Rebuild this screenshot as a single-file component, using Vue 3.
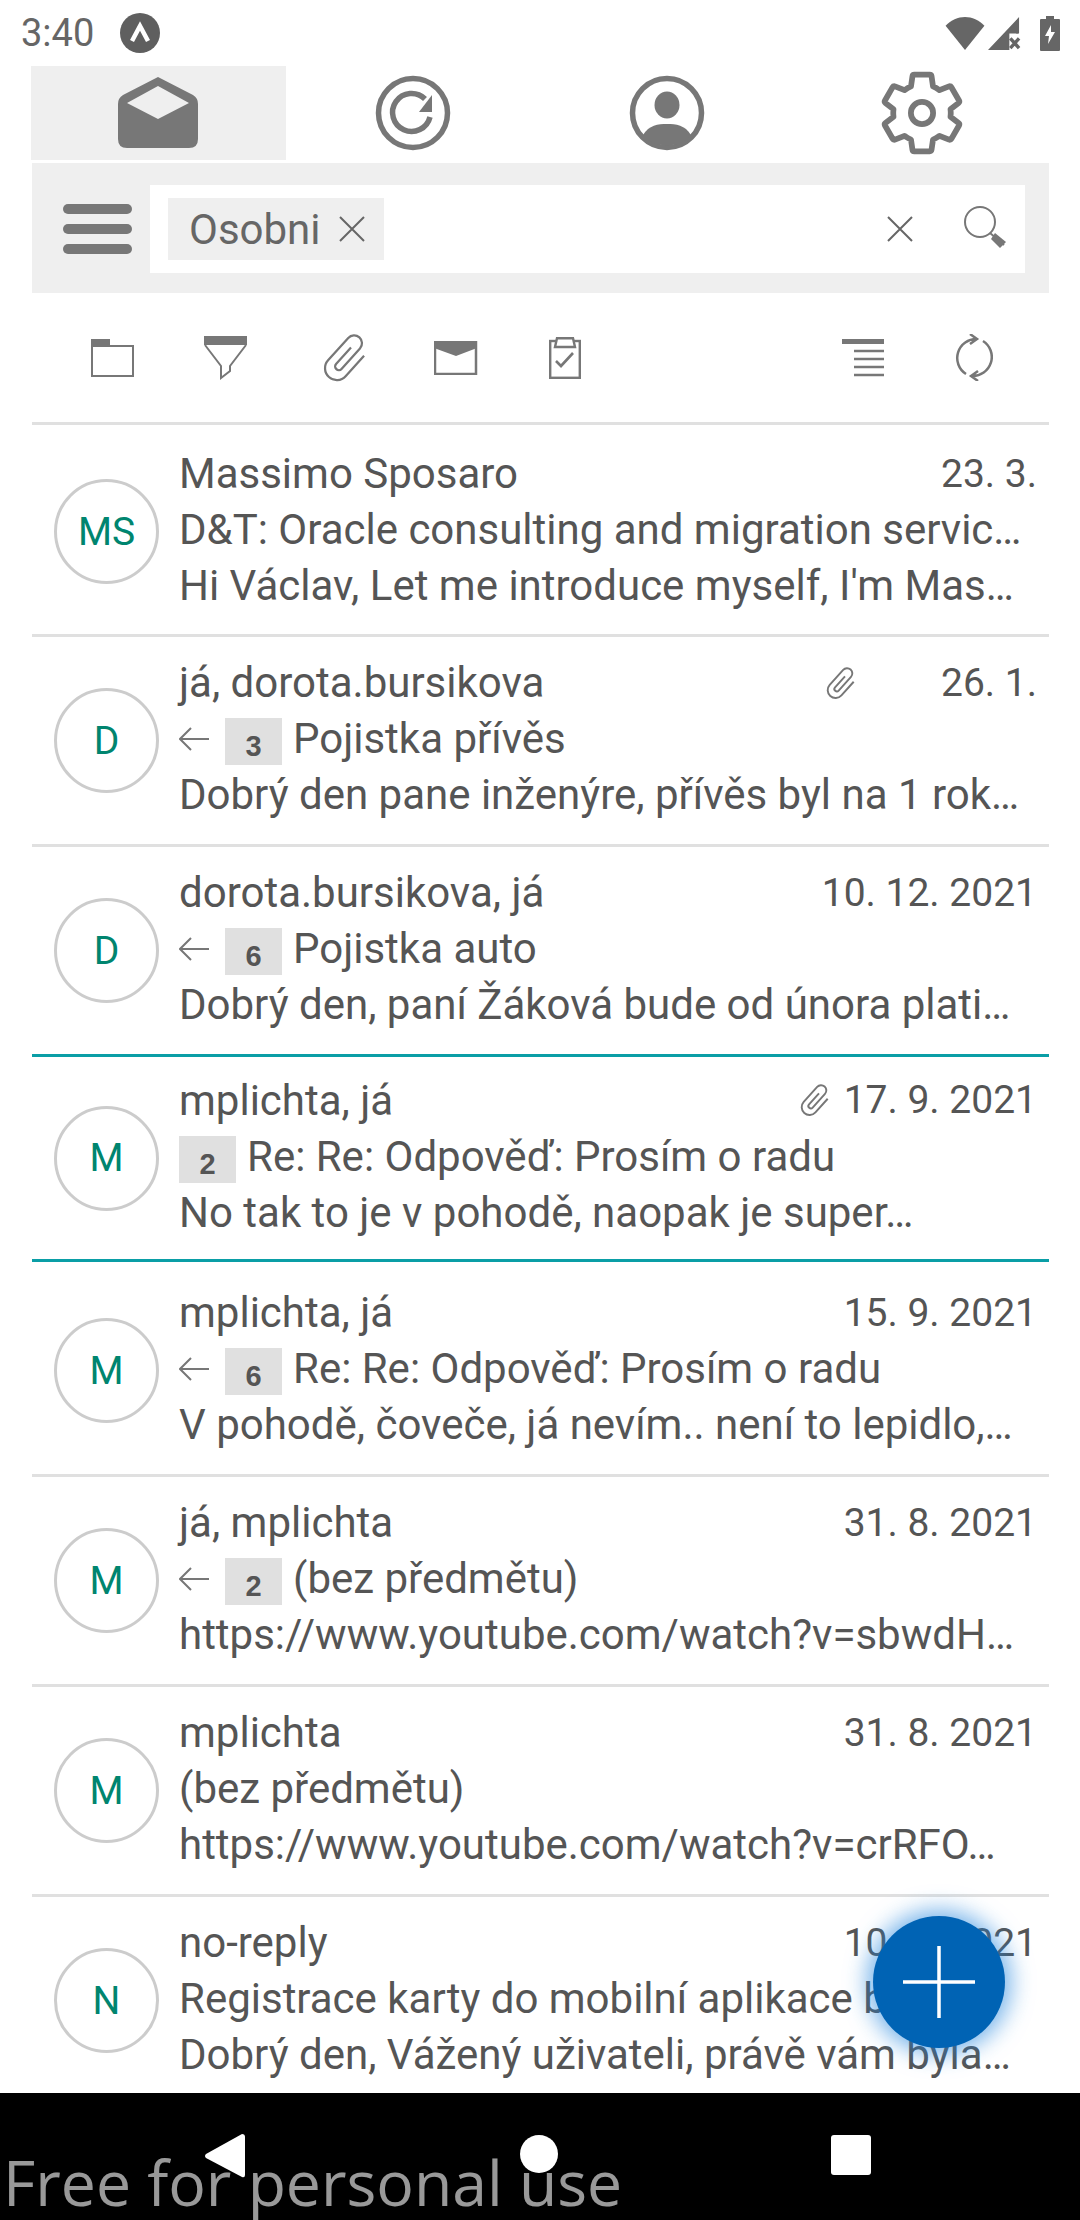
<template>
  <div class="phone">
    <div class="status">
      <span class="time">3:40</span>
      <svg class="app-badge" width="40" height="40" viewBox="0 0 40 40">
        <circle cx="20" cy="20" r="20" fill="#5f5f5f" />
        <path d="M12 28 L20 13 L28 28" fill="none" stroke="#fff" stroke-width="4.5" />
      </svg>
      <div class="status-right">
        <svg width="40" height="33" viewBox="0 0 40 34"><path d="M0 9 C11 -3 29 -3 40 9 L20 34 Z" fill="#666" /></svg>
        <svg class="signal" width="33" height="33" viewBox="0 0 34 34">
          <path d="M0 34 L32 0 V17 H22 V34 Z" fill="#666" />
          <path d="M30 3 V17" stroke="#666" stroke-width="2" />
          <path d="M23 22 L32 32 M32 22 L23 32" stroke="#666" stroke-width="3.5" />
        </svg>
        <svg class="battery" width="20" height="35" viewBox="0 0 20 35">
          <path d="M6 0 H14 V3 H19 a1 1 0 0 1 1 1 V34 a1 1 0 0 1 -1 1 H1 a1 1 0 0 1 -1 -1 V4 a1 1 0 0 1 1 -1 H6 Z" fill="#666" />
          <path d="M11 9 L5 20 H9 L8 28 L15 16 H11 Z" fill="#fff" />
        </svg>
      </div>
    </div>

    <div class="tabs">
      <div class="tab active">
        <svg width="80" height="72" viewBox="0 0 80 72">
          <path fill="#777" fill-rule="evenodd" d="M40 0 L75 18 Q80 21 80 27 V62 Q80 71 71 71 H9 Q0 71 0 62 V27 Q0 21 5 18 Z M40 9 L9 26 L40 42 L71 26 Z" />
        </svg>
      </div>
      <div class="tab">
        <svg width="76" height="76" viewBox="0 0 76 76">
          <circle cx="38" cy="38" r="34.5" fill="none" stroke="#777" stroke-width="5.5" />
          <path d="M55 42 A19 19 0 1 1 50 24" fill="none" stroke="#777" stroke-width="5.5" />
          <path d="M57 20 V37 H44 Z" fill="#777" />
        </svg>
      </div>
      <div class="tab">
        <svg width="76" height="76" viewBox="0 0 76 76">
          <circle cx="38" cy="38" r="34.5" fill="none" stroke="#777" stroke-width="5.5" />
          <ellipse cx="38" cy="30" rx="12.5" ry="13.5" fill="#777" />
          <path d="M14 60 C20 50 29 49 38 49 C47 49 56 50 62 60 C50 74 26 74 14 60 Z" fill="#777" />
        </svg>
      </div>
      <div class="tab">
        <svg width="92" height="92" viewBox="0 0 24 24">
          <path fill="none" stroke="#777" stroke-width="1.5" stroke-linejoin="round" d="M19.43 12.98c.04-.32.07-.64.07-.98 0-.34-.03-.66-.07-.98l2.11-1.65c.19-.15.24-.42.12-.64l-2-3.46c-.09-.16-.26-.25-.44-.25-.06 0-.12.01-.17.03l-2.49 1c-.52-.4-1.08-.73-1.69-.98l-.38-2.65C14.46 2.18 14.25 2 14 2h-4c-.25 0-.46.18-.49.42l-.38 2.65c-.61.25-1.17.59-1.69.98l-2.49-1c-.06-.02-.12-.03-.18-.03-.17 0-.34.09-.43.25l-2 3.46c-.13.22-.07.49.12.64l2.11 1.65c-.04.32-.07.65-.07.98 0 .33.03.66.07.98l-2.11 1.65c-.19.15-.24.42-.12.64l2 3.46c.09.16.26.25.44.25.06 0 .12-.01.17-.03l2.49-1c.52.4 1.08.73 1.69.98l.38 2.65c.03.24.24.42.49.42h4c.25 0 .46-.18.49-.42l.38-2.65c.61-.25 1.17-.59 1.69-.98l2.49 1c.06.02.12.03.18.03.17 0 .34-.09.43-.25l2-3.46c.12-.22.07-.49-.12-.64l-2.11-1.65z" />
          <circle cx="12" cy="12" r="2.9" fill="none" stroke="#777" stroke-width="1.5" />
        </svg>
      </div>
    </div>

    <div class="searchbar">
      <div class="burger"><i></i><i></i><i></i></div>
      <div class="search-input">
        <div class="chip">
          <span>Osobni</span>
          <svg width="26" height="26" viewBox="0 0 26 26"><path d="M1 1 L25 25 M25 1 L1 25" stroke="#666" stroke-width="2" /></svg>
        </div>
        <svg class="clear" width="26" height="26" viewBox="0 0 26 26"><path d="M1 1 L25 25 M25 1 L1 25" stroke="#666" stroke-width="2" /></svg>
        <svg class="loupe" width="44" height="42" viewBox="0 0 44 42">
          <circle cx="16" cy="16" r="15" fill="none" stroke="#777" stroke-width="2" />
          <path d="M26 27 L40 39" stroke="#777" stroke-width="2" />
          <path d="M31 27 L42 36 L36 42 L27 33 Z" fill="#777" />
        </svg>
      </div>
    </div>

    <div class="toolbar">
      <div class="tool">
        <svg width="44" height="38" viewBox="0 0 44 38">
          <rect x="1" y="7" width="41" height="30" fill="none" stroke="#777" stroke-width="2" />
          <rect x="0" y="0" width="19" height="7" fill="#777" />
        </svg>
      </div>
      <div class="tool">
        <svg width="44" height="44" viewBox="0 0 44 44">
          <rect x="0" y="0" width="43" height="9" fill="#777" />
          <path d="M1 9 L17 30 V42 L26 35 V30 L42 9" fill="none" stroke="#777" stroke-width="2" />
        </svg>
      </div>
      <div class="tool">
        <svg class="tool-clip" width="63" height="63" viewBox="0 0 24 24">
          <path d="M16.5 7v10.5a4.5 4.5 0 0 1-9 0V6a3 3 0 0 1 6 0v10.5a1.4 1.4 0 0 1-2.8 0V8" fill="none" stroke="#777" stroke-width="0.85" transform="rotate(42 12 12)" />
        </svg>
      </div>
      <div class="tool">
        <svg class="tool-mail" width="44" height="34" viewBox="0 0 44 34">
          <rect x="1" y="1" width="41" height="32" fill="none" stroke="#777" stroke-width="2.5" />
          <path d="M0 0 H43 V7 L22 15 L0 7 Z" fill="#777" />
        </svg>
      </div>
      <div class="tool">
        <svg width="32" height="42" viewBox="0 0 32 42">
          <rect x="1.2" y="4" width="29.6" height="36.8" fill="#fff" stroke="#777" stroke-width="2.4" />
          <path d="M6 10 L8 1.2 H24 L26 10 Z" fill="#fff" stroke="#777" stroke-width="2.4" />
          <path d="M7 24 L12 29 L24 16" fill="none" stroke="#777" stroke-width="2.6" />
        </svg>
      </div>
      <div class="tools-right">
        <div class="tool">
          <svg width="42" height="38" viewBox="0 0 42 38">
            <rect x="0" y="0" width="42" height="5" fill="#777" />
            <path d="M12 12 H42 M12 20 H42 M12 28 H42 M12 36 H42" stroke="#777" stroke-width="2.5" />
          </svg>
        </div>
        <div class="tool">
          <svg width="38" height="47" viewBox="0 0 38 47">
            <path d="M11 40 A19 19 0 0 1 22 5 M15 0 L22 5 L15 10" fill="none" stroke="#777" stroke-width="2.5" />
            <path d="M28 7 A19 19 0 0 1 17 42 M23 37 L16 42 L23 47" fill="none" stroke="#777" stroke-width="2.5" />
          </svg>
        </div>
      </div>
    </div>

    <div class="list">
      <div v-for="m in mails" :key="m.from + m.date" class="row" :class="{ teal: m.teal, short: m.short }">
        <div class="avatar">{{ m.initials }}</div>
        <div class="body">
          <div class="line top">
            <span class="from">{{ m.from }}</span>
            <svg v-if="m.clip" class="clip" :class="m.clip" width="42" height="42" viewBox="0 0 24 24">
              <path d="M16.5 7v10.5a4.5 4.5 0 0 1-9 0V6a3 3 0 0 1 6 0v10.5a1.4 1.4 0 0 1-2.8 0V8" fill="none" stroke="#777" stroke-width="1.1" transform="rotate(42 12 12)" />
            </svg>
            <span class="date">{{ m.date }}</span>
          </div>
          <div class="line">
            <svg v-if="m.replied" class="arrow" width="30" height="24" viewBox="0 0 30 24">
              <path d="M30 12 H2 M12 1 L1 12 L12 23" fill="none" stroke="#777" stroke-width="2" />
            </svg>
            <span v-if="m.count" class="count">{{ m.count }}</span>
            <span class="text">{{ m.subject }}</span>
          </div>
          <div class="line"><span class="text">{{ m.preview }}</span></div>
        </div>
      </div>
    </div>

    <div class="fab">
      <svg width="72" height="72" viewBox="0 0 72 72"><path d="M36 0 V72 M0 36 H72" stroke="#fff" stroke-width="3.5" /></svg>
    </div>

    <div class="navbar">
      <svg class="nav-back" width="40" height="44" viewBox="0 0 40 44"><path d="M37 0 Q40 0 40 3 V41 Q40 44 37 43 L1 24 Q-1 22 1 20 Z" fill="#fff" /></svg>
      <span class="nav-home"></span>
      <span class="nav-square"></span>
      <span class="watermark">Free for personal use</span>
    </div>
  </div>
</template>

<script setup>
const mails = [
  {
    initials: 'MS',
    from: 'Massimo Sposaro',
    date: '23. 3.',
    subject: 'D&T: Oracle consulting and migration servic…',
    preview: "Hi Václav, Let me introduce myself, I'm Mas…"
  },
  {
    initials: 'D',
    from: 'já, dorota.bursikova',
    date: '26. 1.',
    clip: 'far',
    replied: true,
    count: 3,
    subject: 'Pojistka přívěs',
    preview: 'Dobrý den pane inženýre, přívěs byl na 1 rok…'
  },
  {
    initials: 'D',
    from: 'dorota.bursikova, já',
    date: '10. 12. 2021',
    replied: true,
    count: 6,
    subject: 'Pojistka auto',
    preview: 'Dobrý den, paní Žáková bude od února plati…',
    teal: true
  },
  {
    initials: 'M',
    from: 'mplichta, já',
    date: '17. 9. 2021',
    clip: 'near',
    count: 2,
    subject: 'Re: Re: Odpověď: Prosím o radu',
    preview: 'No tak to je v pohodě, naopak je super…',
    teal: true,
    short: true
  },
  {
    initials: 'M',
    from: 'mplichta, já',
    date: '15. 9. 2021',
    replied: true,
    count: 6,
    subject: 'Re: Re: Odpověď: Prosím o radu',
    preview: 'V pohodě, čoveče, já nevím.. není to lepidlo,…'
  },
  {
    initials: 'M',
    from: 'já, mplichta',
    date: '31. 8. 2021',
    replied: true,
    count: 2,
    subject: '(bez předmětu)',
    preview: 'https://www.youtube.com/watch?v=sbwdH…'
  },
  {
    initials: 'M',
    from: 'mplichta',
    date: '31. 8. 2021',
    subject: '(bez předmětu)',
    preview: 'https://www.youtube.com/watch?v=crRFO…'
  },
  {
    initials: 'N',
    from: 'no-reply',
    date: '10. 8. 2021',
    subject: 'Registrace karty do mobilní aplikace byla…',
    preview: 'Dobrý den, Vážený uživateli, právě vám byla…'
  }
]
</script>

<style scoped>
.phone {
  position: relative;
  width: 1080px;
  height: 2220px;
  overflow: hidden;
  display: flex;
  flex-direction: column;
  background: #fff;
  font-family: Roboto, "Liberation Sans", sans-serif;
  color: #555;
}

.status { height: 66px; display: flex; align-items: center; padding: 0 20px 0 21px; flex-shrink: 0; }
.time { font-size: 38px; color: #666; margin-right: 26px; }
.status-right { margin-left: auto; display: flex; align-items: center; }
.signal { margin-left: 3px; }
.battery { margin-left: 19px; }

.tabs { display: flex; height: 94px; margin: 0 31px; flex-shrink: 0; }
.tab { flex: 1; display: flex; align-items: center; justify-content: center; }
.tab.active { background: #efefef; }

.searchbar {
  height: 130px;
  margin: 3px 31px 0 32px;
  padding: 22px 24px 20px 0;
  box-sizing: border-box;
  background: #efefef;
  display: flex;
  flex-shrink: 0;
}
.burger { width: 118px; padding-left: 13px; box-sizing: border-box; display: flex; flex-direction: column; justify-content: center; align-items: center; gap: 10px; }
.burger i { display: block; width: 69px; height: 10px; border-radius: 5px; background: #777; }
.search-input { flex: 1; background: #fff; display: flex; align-items: center; padding: 0 17px 0 18px; }
.chip { height: 62px; display: flex; align-items: center; gap: 18px; padding: 0 19px 0 21px; background: #efefef; font-size: 42px; color: #666; }
.clear { margin-left: auto; margin-right: 51px; }
.loupe { margin-top: -4px; }

.toolbar {
  height: 132px;
  margin: 0 31px 0 32px;
  padding-left: 24px;
  box-sizing: border-box;
  border-bottom: 3px solid #e0e0e0;
  display: flex;
  align-items: center;
  flex-shrink: 0;
}
.tool { width: 113px; display: flex; justify-content: center; align-items: center; }
.tool-clip { margin-left: 16px; }
.tool-mail { margin-left: 8px; }
.tools-right { margin-left: auto; display: flex; margin-right: 20px; }
.tools-right .tool { width: 111px; }

.list { margin: 0 31px 0 32px; flex: 1; overflow: hidden; }
.row {
  height: 210px;
  box-sizing: border-box;
  border-bottom: 3px solid #e0e0e0;
  display: flex;
  align-items: center;
  padding: 0 12px 4px 22px;
}
.row:first-child { height: 212px; padding-top: 4px; }
.row.teal { border-bottom-color: #0a9ea6; }
.row.short { height: 205px; margin-bottom: 5px; }
.avatar {
  width: 105px;
  height: 105px;
  margin-top: 4px;
  box-sizing: border-box;
  border: 3px solid #ccc;
  border-radius: 50%;
  display: flex;
  align-items: center;
  justify-content: center;
  font-size: 39px;
  color: #00856f;
  flex-shrink: 0;
  margin-right: 20px;
}
.body { flex: 1; min-width: 0; }
.line { height: 56px; display: flex; align-items: center; font-size: 42px; white-space: nowrap; }
.from { flex: 1; }
.date { font-size: 39px; }
.clip.far { margin-right: 78px; }
.clip.near { margin-right: 7px; }
.arrow { margin-right: 16px; flex-shrink: 0; }
.count {
  width: 57px;
  height: 47px;
  margin-top: 6px;
  background: #e0e0e0;
  display: flex;
  align-items: flex-end;
  justify-content: center;
  font-family: "Liberation Sans", sans-serif;
  font-weight: bold;
  font-size: 29px;
  line-height: 38px;
  margin-right: 11px;
  flex-shrink: 0;
}

.fab {
  position: absolute;
  left: 873px;
  top: 1916px;
  width: 132px;
  height: 132px;
  border-radius: 50%;
  background: #0063b4;
  box-shadow: 0 0 22px 6px rgba(30, 130, 220, 0.6);
  display: flex;
  align-items: center;
  justify-content: center;
}

.navbar { position: relative; height: 127px; background: #000; flex-shrink: 0; }
.nav-back { position: absolute; left: 205px; top: 41px; }
.nav-home { position: absolute; left: 520px; top: 42px; width: 38px; height: 38px; border-radius: 50%; background: #fff; }
.nav-square { position: absolute; left: 831px; top: 42px; width: 40px; height: 40px; border-radius: 3px; background: #fff; }
.watermark {
  position: absolute;
  left: 3px;
  top: 46px;
  font-family: "Open Sans", sans-serif;
  font-size: 62.5px;
  line-height: 86px;
  color: rgba(255, 255, 255, 0.6);
  white-space: nowrap;
}
</style>
